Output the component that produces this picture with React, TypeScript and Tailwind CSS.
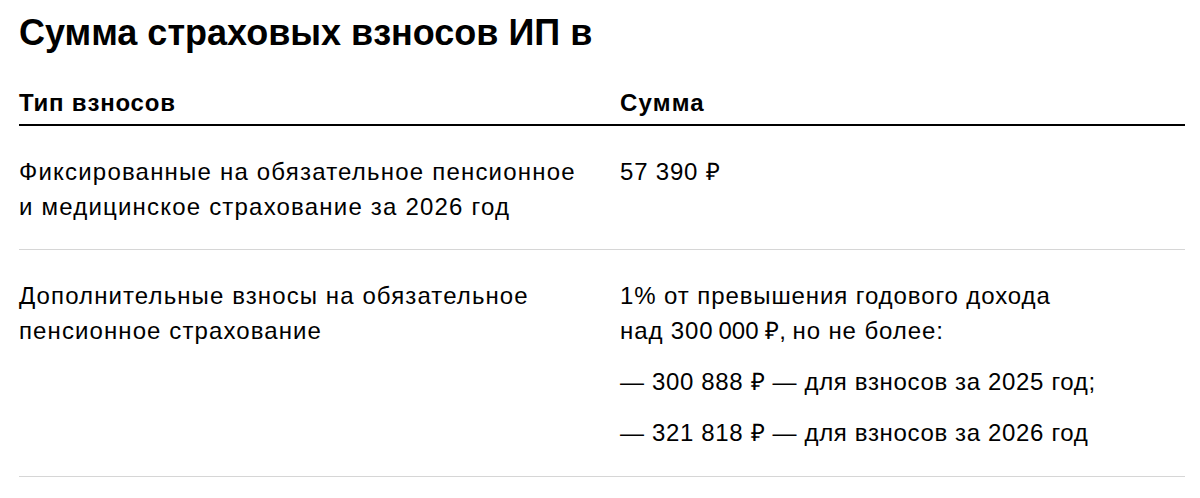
export default function App() {
  return (
    <div className="bg-white text-black w-[1200px] h-[498px] overflow-hidden font-['Liberation_Sans',Arial,sans-serif]">
      <div className="pl-[19px] pr-[15px]">
        {/* Заголовок */}
        <h1 className="pt-[13px] text-[36px] leading-[40px] font-bold">
          Сумма страховых взносов ИП в
        </h1>

        {/* Таблица */}
        <div className="mt-[36px]">
          <div className="grid grid-cols-[601px_1fr] border-b-2 border-black pb-[7px] text-[24px] leading-[28px] font-bold tracking-[0.8px]">
            <div>Тип взносов</div>
            <div className="tracking-[1.2px]">Сумма</div>
          </div>

          <div className="grid grid-cols-[601px_1fr] border-b border-[#d6d6d6] pt-[28px] pb-[25px] text-[24px] leading-[35px]">
            <div className="tracking-[1.2px]">
              Фиксированные на обязательное пенсионное
              <br />
              и медицинское страхование за 2026 год
            </div>
            <div className="tracking-[0.8px]">57 390 ₽</div>
          </div>

          <div className="grid grid-cols-[601px_1fr] border-b border-[#d6d6d6] pt-[28px] pb-[26px] text-[24px] leading-[35px]">
            <div className="tracking-[1.1px]">
              Дополнительные взносы на обязательное
              <br />
              пенсионное страхование
            </div>
            <div className="flex flex-col gap-[16px] tracking-[0.65px]">
              <p className="tracking-[0.9px]">
                1% от превышения годового дохода
                <br />
                над 300{'\u202F'}000 ₽, но не более:
              </p>
              <p>— 300 888 ₽ — для взносов за 2025 год;</p>
              <p>— 321 818 ₽ — для взносов за 2026 год</p>
            </div>
          </div>
        </div>
      </div>
    </div>
  );
}
